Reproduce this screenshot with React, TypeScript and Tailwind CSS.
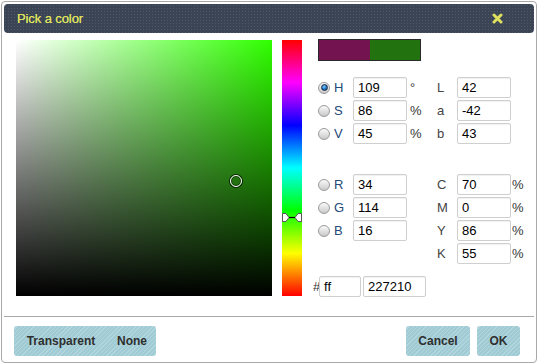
import React from "react";

function Radio({ checked }: { checked?: boolean }) {
  return (
    <span className="w-[12px] h-[12px] rounded-full border border-[#9a9a9a] bg-[linear-gradient(#fafafa,#c9c9c9)] flex items-center justify-center shrink-0">
      {checked && (
        <span className="w-[7px] h-[7px] rounded-full border border-[#1b2c44] bg-[radial-gradient(circle_at_40%_35%,#7fd0ff,#1a6fc0_55%,#0b3a70)]" />
      )}
    </span>
  );
}

function Field({ value, w = "w-[54px]" }: { value: string; w?: string }) {
  return (
    <div
      className={`${w} h-[21px] border border-[#cfcfcf] rounded-[2px] bg-white shadow-[inset_0_1px_1px_rgba(0,0,0,0.06)] pl-[4px] text-[13px] leading-[19px] text-black`}
    >
      {value}
    </div>
  );
}

function RadioRow({
  label,
  value,
  unit,
  checked,
}: {
  label: string;
  value: string;
  unit: string;
  checked?: boolean;
}) {
  return (
    <div className="h-[23px] flex items-center">
      <Radio checked={checked} />
      <span className="w-[23px] pl-[4px] text-[13px] text-[#234a78]">{label}</span>
      <Field value={value} />
      <span className="w-[30px] pl-[3px] text-[13px] text-[#333] leading-[13px]">{unit}</span>
    </div>
  );
}

function RightRow({ label, value, unit }: { label: string; value: string; unit?: string }) {
  return (
    <div className="h-[23px] flex items-center">
      <span className="w-[20px] text-[13px] text-[#444]">{label}</span>
      <Field value={value} />
      <span className="pl-[1px] text-[13px] text-[#333]">{unit}</span>
    </div>
  );
}

function Btn({ children, w }: { children: React.ReactNode; w: string }) {
  return (
    <div className={`${w} h-[30px] flex items-center justify-center text-[12px] font-bold text-[#2f2f2f]`}>
      {children}
    </div>
  );
}

export default function App() {
  const stripe =
    "bg-[#a0cbd5] bg-[image:repeating-linear-gradient(135deg,#a0cbd5_0px,#a0cbd5_2px,#b2d6de_2px,#b2d6de_3px)]";
  return (
    <div className="w-[539px] h-[364px] bg-white font-['Liberation_Sans',Arial,sans-serif] overflow-hidden">
      <div className="ml-[1px] mt-[1px] w-[536px] h-[362px] border border-[#a9a9a9] rounded-[4px] p-[2px] flex flex-col">
        {/* Title bar */}
        <div className="h-[29px] rounded-[4px] bg-[#3a4454] bg-[image:radial-gradient(#4e596a_0.7px,transparent_0.9px)] bg-[length:3px_3px] flex items-center justify-between pl-[13px] pr-[31px]">
          <span className="text-[13px] text-[#dfe05e] tracking-[-0.1px] [text-shadow:0_0_0.4px_#dfe05e]">Pick a color</span>
          <svg width="11" height="11" viewBox="0 0 11 11">
            <path d="M2 2 L9 9 M9 2 L2 9" stroke="#dfe05e" strokeWidth="3" strokeLinecap="round" />
          </svg>
        </div>

        {/* Body */}
        <div className="mt-[7px] pl-[12px] flex">
          {/* SV square */}
          <div className="relative w-[256px] h-[256px] bg-[#2fff00]">
            <div className="absolute inset-0 bg-[linear-gradient(to_right,#fff,rgba(255,255,255,0))]" />
            <div className="absolute inset-0 bg-[linear-gradient(to_top,#000,rgba(0,0,0,0))]" />
            <span className="absolute left-[214px] top-[135px] w-[12px] h-[12px] rounded-full border-[1.5px] border-white shadow-[0_0_0_1px_rgba(0,0,0,0.7),inset_0_0_0_1px_rgba(0,0,0,0.5)]" />
          </div>

          {/* Hue bar */}
          <div className="relative ml-[10px] w-[20px] h-[256px] bg-[linear-gradient(to_bottom,#f00,#f0f,#00f,#0ff,#0f0,#ff0,#f00)]">
            <svg className="absolute left-0 top-[173px]" width="20" height="9" viewBox="0 0 20 9">
              <path d="M0.5 0.5 H4 L7 4.5 L4 8.5 H0.5 Z" fill="#fff" stroke="#555" strokeWidth="1" />
              <path d="M19.5 0.5 H16 L13 4.5 L16 8.5 H19.5 Z" fill="#fff" stroke="#555" strokeWidth="1" />
              <line x1="7" y1="4.5" x2="13" y2="4.5" stroke="#000" strokeWidth="1.2" />
            </svg>
          </div>

          {/* Right panel */}
          <div className="ml-[16px] mt-[-1px] flex flex-col">
            <div className="w-[103px] h-[22px] border border-[#2a2a2a] flex">
              <div className="flex-1 bg-[#731350]" />
              <div className="flex-1 bg-[#227210]" />
            </div>

            <div className="mt-[15px] flex">
              <div className="flex flex-col">
                <RadioRow label="H" value="109" unit="°" checked />
                <RadioRow label="S" value="86" unit="%" />
                <RadioRow label="V" value="45" unit="%" />
                <div className="h-[28px]" />
                <RadioRow label="R" value="34" unit="" />
                <RadioRow label="G" value="114" unit="" />
                <RadioRow label="B" value="16" unit="" />
                <div className="h-[34px]" />
                <div className="ml-[-5px] h-[21px] flex items-center">
                  <span className="w-[6px] text-[13px] text-[#333]">#</span>
                  <Field value="ff" w="w-[42px]" />
                  <div className="ml-[2px]">
                    <Field value="227210" w="w-[63px]" />
                  </div>
                </div>
              </div>
              <div className="flex flex-col">
                <RightRow label="L" value="42" />
                <RightRow label="a" value="-42" />
                <RightRow label="b" value="43" />
                <div className="h-[28px]" />
                <RightRow label="C" value="70" unit="%" />
                <RightRow label="M" value="0" unit="%" />
                <RightRow label="Y" value="86" unit="%" />
                <RightRow label="K" value="55" unit="%" />
              </div>
            </div>
          </div>
        </div>

        {/* Separator */}
        <div className="mt-[19px] h-px bg-[#a9a9a9]" />

        {/* Buttons */}
        <div className="mt-[9px] pl-[10px] pr-[14px] flex justify-between">
          <div className={`flex rounded-[3px] ${stripe}`}>
            <Btn w="w-[94px]">Transparent</Btn>
            <Btn w="w-[48px]">None</Btn>
          </div>
          <div className="flex gap-[7px]">
            <div className={`rounded-[3px] ${stripe}`}>
              <Btn w="w-[64px]">Cancel</Btn>
            </div>
            <div className={`rounded-[3px] ${stripe}`}>
              <Btn w="w-[43px]">OK</Btn>
            </div>
          </div>
        </div>
      </div>
    </div>
  );
}
